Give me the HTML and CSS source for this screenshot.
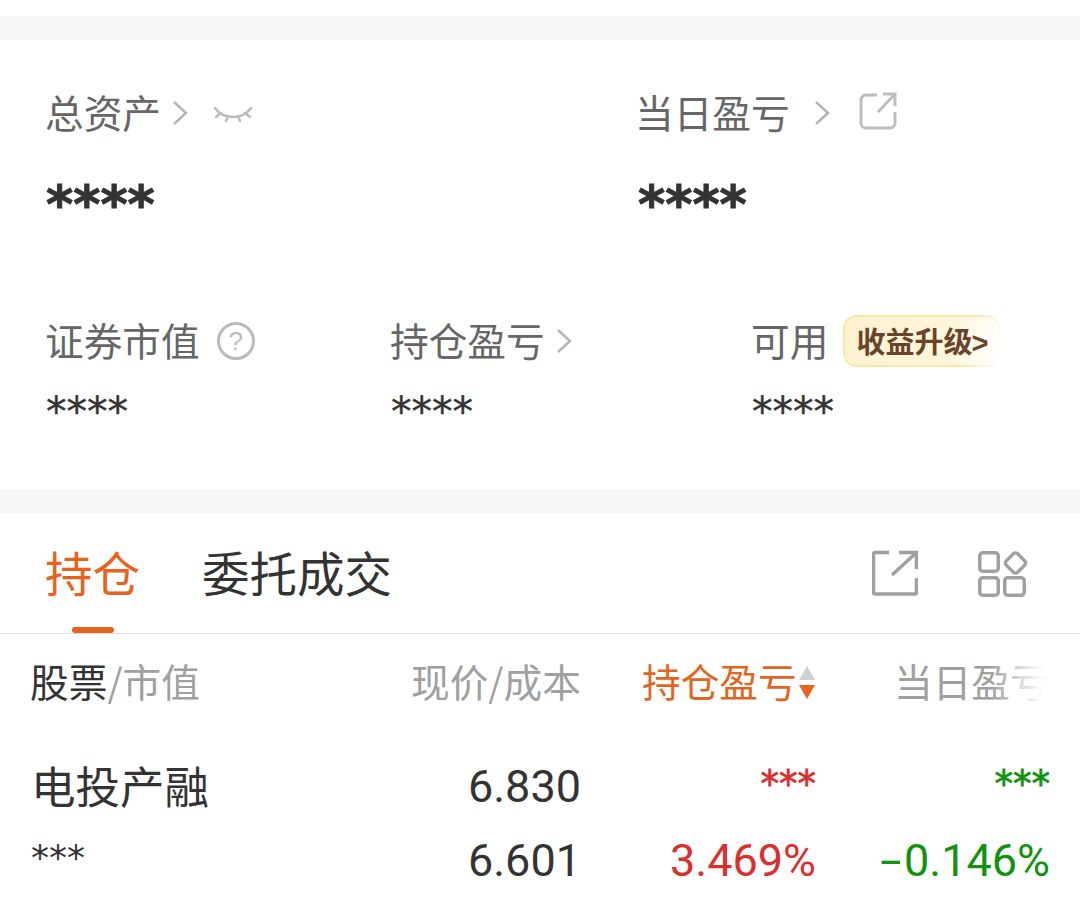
FILE: index.html
```html
<!DOCTYPE html>
<html lang="zh-CN">
<head>
  <meta charset="UTF-8">
  <meta name="viewport" content="width=device-width, initial-scale=1.0">
  <title>持仓</title>
  <link rel="stylesheet" href="styles.css">
</head>
<body>
  <div class="gap-bar first"></div>

  <section class="summary">
    <div class="summary-top">
      <div class="top-col">
        <div class="label-row">
          <span class="label">总资产</span>
          <svg class="chev chev-tight" viewBox="0 0 16 26"><path d="M2 2l12 11L2 24"/></svg>
          <svg class="eye" viewBox="0 0 40 18"><path d="M2 3c5 7 11 9 18 9s13-2 18-9M8 8L3 12M15 11l-2 5M25 11l2 5M32 8l5 4"/></svg>
        </div>
        <div class="mask-big">****</div>
      </div>
      <div class="top-col right">
        <div class="label-row">
          <span class="label">当日盈亏</span>
          <svg class="chev chev-wide" viewBox="0 0 16 26"><path d="M2 2l12 11L2 24"/></svg>
          <svg class="share" viewBox="0 0 38 38"><path d="M18 3H7a5 5 0 0 0-5 5v23a5 5 0 0 0 5 5h24a5 5 0 0 0 5-5V20M19 20L35 3M24 2h12v12"/></svg>
        </div>
        <div class="mask-big">****</div>
      </div>
    </div>
    <div class="summary-bottom">
      <div class="sub-col c1">
        <div class="label-row">
          <span class="label">证券市值</span>
          <span class="help">?</span>
        </div>
        <div class="mask-small">****</div>
      </div>
      <div class="sub-col c2">
        <div class="label-row">
          <span class="label">持仓盈亏</span>
          <svg class="chev chev-tight" viewBox="0 0 16 26"><path d="M2 2l12 11L2 24"/></svg>
        </div>
        <div class="mask-small">****</div>
      </div>
      <div class="sub-col c3">
        <div class="label-row">
          <span class="label">可用</span>
          <span class="upgrade">收益升级<b class="upgrade-arrow">&gt;</b></span>
        </div>
        <div class="mask-small">****</div>
      </div>
    </div>
  </section>

  <div class="gap-bar"></div>

  <section class="tabs">
    <div class="tab active">持仓<span class="tab-line"></span></div>
    <div class="tab">委托成交</div>
    <div class="tab-icons">
      <svg class="icon-export" viewBox="0 0 46 46"><path d="M17 2.500H3A1.500 1.500 0 0 0 1.500 4v38.500A1.500 1.500 0 0 0 3 44h40a1.500 1.500 0 0 0 1.500-1.500V28M20 25L44 3M27 2.500h17.500V19"/></svg>
      <svg class="icon-grid" viewBox="0 0 50 48">
        <rect x="1.750" y="3.750" width="18.500" height="18.500" rx="3"/>
        <rect x="1.750" y="28.750" width="18.500" height="17.500" rx="3"/>
        <rect x="26.750" y="28.750" width="19.500" height="17.500" rx="3"/>
        <rect x="29.500" y="6" width="16" height="16" rx="3" transform="rotate(45 37.500 14)"/>
      </svg>
    </div>
  </section>

  <section class="table">
    <div class="table-head">
      <div class="th-name"><span class="dark">股票</span>/市值</div>
      <div class="th-price">现价/成本</div>
      <div class="th-pl">持仓盈亏<span class="sort"><i class="up"></i><i class="down"></i></span></div>
      <div class="th-day">当日盈亏</div>
      <div class="head-fade"></div>
    </div>
    <div class="table-row">
      <div class="td-name">
        <div class="stock-name">电投产融</div>
        <div class="stock-mask">***</div>
      </div>
      <div class="td-price">
        <div class="num">6.830</div>
        <div class="num">6.601</div>
      </div>
      <div class="td-pl red">
        <div class="star">***</div>
        <div class="num">3.469%</div>
      </div>
      <div class="td-day green">
        <div class="star">***</div>
        <div class="num"><span class="minus">-</span>0.146%</div>
      </div>
    </div>
  </section>
</body>
</html>
```

FILE: styles.css
```css
html, body {
  margin: 0;
  padding: 0;
}

body {
  width: 1080px;
  height: 898px;
  overflow: hidden;
  padding-top: 16px;
  box-sizing: border-box;
  background-color: #fff;
  font-family: "Noto Sans CJK SC", "Noto Sans", sans-serif;
  color: #333;
}

.gap-bar {
  height: 24px;
  background-color: #f7f7f7;
}

/* Summary block */
.summary {
  height: 449px;
  padding: 0 0 0 45px;
  box-sizing: border-box;
}

.summary-top {
  display: flex;
  padding-top: 43px;
}

.top-col {
  flex: none;
  width: 592px;
}

.top-col.right {
  width: 400px;
}

.right .label {
  margin-left: -2px;
}

.label-row {
  display: flex;
  align-items: center;
  height: 56px;
}

.label {
  font-size: 38.700px;
  line-height: 56px;
  color: #666;
}

.chev {
  width: 16px;
  height: 26px;
  margin-top: 4px;
  fill: none;
  stroke: #b5b5b5;
  stroke-width: 2.500;
}

.chev-tight {
  margin-left: 11px;
}

.chev-wide {
  margin-left: 24px;
}

.eye {
  width: 40px;
  height: 18px;
  margin-left: 25px;
  margin-top: 6px;
  fill: none;
  stroke: #bbb;
  stroke-width: 2.500;
  stroke-linecap: round;
}

.share {
  width: 38px;
  height: 38px;
  margin-left: 29px;
  fill: none;
  stroke: #bdbdbd;
  stroke-width: 3;
}

.mask-big {
  margin-top: 38px;
  padding-left: 1px;
  height: 54px;
  font-family: "DejaVu Sans", sans-serif;
  font-size: 52px;
  line-height: 54px;
  font-weight: bold;
  color: #333;
  -webkit-text-stroke: 1px #333;
}

.summary-bottom {
  display: flex;
  margin-top: 80px;
}

.c1 { width: 345px; }
.c2 { width: 361px; }

.help {
  width: 38px;
  height: 38px;
  margin-left: 17px;
  margin-top: 4px;
  border: 3px solid #bbb;
  border-radius: 50%;
  box-sizing: border-box;
  color: #bbb;
  font-family: "Liberation Sans", sans-serif;
  font-size: 26px;
  line-height: 32px;
  text-align: center;
}

.upgrade {
  width: 157px;
  height: 52px;
  margin-left: 15px;
  margin-top: 4px;
  box-sizing: border-box;
  padding-left: 11px;
  border: 2px solid transparent;
  border-radius: 14px;
  background: linear-gradient(100deg, #fdf1cf 0%, #fff6dd 72%, #fff 100%) padding-box,
    linear-gradient(100deg, #fce8a6 0%, #fce8a6 78%, #fff 100%) border-box;
  color: #68452a;
  font-size: 29px;
  font-weight: bold;
  line-height: 46px;
  white-space: nowrap;
}

.upgrade-arrow {
  font-family: "Liberation Sans", sans-serif;
  margin-left: -1px;
}

.mask-small {
  margin-top: 25px;
  padding-left: 1px;
  height: 39px;
  font-family: "DejaVu Sans", sans-serif;
  font-size: 41px;
  line-height: 40px;
  color: #333;
  -webkit-text-stroke: 0.400px #333;
}

/* Tabs */
.tabs {
  display: flex;
  align-items: center;
  height: 121px;
  padding-left: 45px;
  border-bottom: 1px solid #e2e2e2;
  box-sizing: border-box;
}

.tab {
  position: relative;
  margin-top: -4px;
  margin-right: 62px;
  font-size: 47.500px;
  line-height: 121px;
  color: #333;
}

.tab.active {
  color: #e8621c;
}

.tab-line {
  position: absolute;
  left: 27px;
  bottom: -1.500px;
  width: 42px;
  height: 6px;
  border-radius: 3px;
  background-color: #e8621c;
}

.tab-icons {
  display: flex;
  align-items: center;
  margin-left: auto;
  padding-right: 52px;
  gap: 60px;
}

.icon-export {
  width: 46px;
  height: 46px;
  fill: none;
  stroke: #a0a0a0;
  stroke-width: 3.500;
}

.icon-grid {
  width: 50px;
  height: 48px;
  fill: none;
  stroke: #a0a0a0;
  stroke-width: 3.500;
}

/* Table */
.table-head {
  position: relative;
  display: flex;
  align-items: center;
  height: 92px;
  padding-left: 30px;
  font-size: 38.700px;
  color: #a0a0a0;
  overflow: hidden;
  white-space: nowrap;
}

.dark {
  color: #333;
}

.th-name { width: 381px; flex: none; }

.th-price { width: 231px; flex: none; }

.th-pl {
  display: flex;
  flex: none;
  align-items: center;
  width: 252px;
  color: #e0651e;
}

.sort {
  display: flex;
  flex-direction: column;
  gap: 5px;
  margin-left: 2px;
  margin-top: 5px;
}

.sort i {
  display: block;
  width: 0;
  height: 0;
  border-left: 8px solid transparent;
  border-right: 8px solid transparent;
}

.sort .up {
  border-bottom: 14px solid #d0d0d0;
}

.sort .down {
  border-top: 14px solid #e8621c;
}

.head-fade {
  position: absolute;
  right: 0;
  top: 0;
  width: 90px;
  height: 100%;
  background: linear-gradient(90deg, rgba(255, 255, 255, 0) 0%, rgba(255, 255, 255, 0.95) 55%, rgba(255, 255, 255, 0.9) 100%);
}

.table-row {
  display: flex;
  padding-top: 24px;
}

.td-name {
  width: 336px;
  padding-left: 31px;
  box-sizing: border-box;
}

.stock-name {
  font-size: 44.500px;
  line-height: 70px;
  color: #333;
}

.stock-mask {
  font-family: "DejaVu Sans", sans-serif;
  font-size: 36px;
  line-height: 76px;
}

.td-price,
.td-pl,
.td-day {
  text-align: right;
}

.td-price { width: 245px; color: #333; }
.td-pl { width: 235px; }
.td-day { width: 234px; }

.num {
  height: 74px;
  font-family: Roboto, "Noto Sans", sans-serif;
  font-size: 45px;
  line-height: 74px;
}

.minus {
  display: inline-block;
  margin-right: 3px;
  transform: scaleX(1.700);
  transform-origin: right;
}

.star {
  height: 74px;
  font-family: "DejaVu Sans", sans-serif;
  font-size: 37px;
  line-height: 70px;
  -webkit-text-stroke: 0.800px currentColor;
}

.red { color: #d9302e; }
.green { color: #11930f; }
```
